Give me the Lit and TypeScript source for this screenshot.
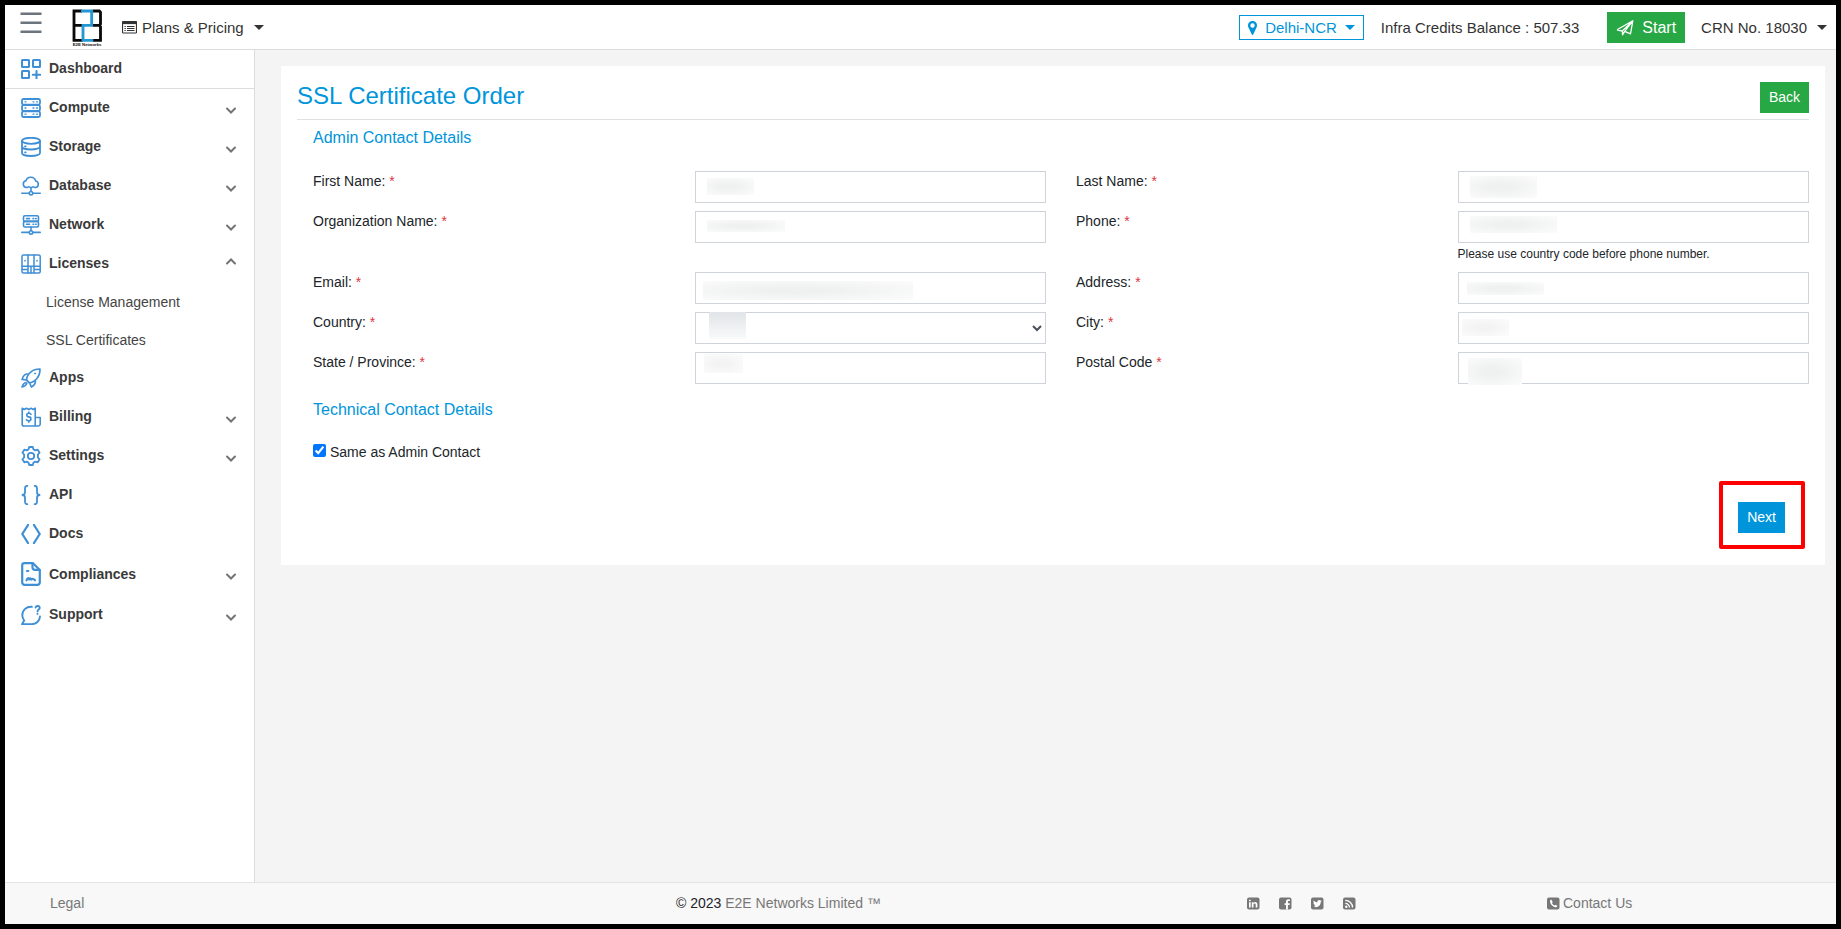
import { LitElement, html, svg, css, nothing } from "lit";
import { customElement, property, state } from "lit/decorators.js";
import { styleMap } from "lit/directives/style-map.js";

const stroke = (body: unknown, width = 1.8) => html`
  <svg viewBox="0 0 20 20" width="20" height="20" fill="none" stroke="#3f8fd6" stroke-width=${width}
    stroke-linecap="round" stroke-linejoin="round" aria-hidden="true">${body}</svg>`;

const icons: Record<string, unknown> = {
  dashboard: stroke(svg`<g stroke-linejoin="miter"><rect x="1" y="1" width="7" height="7" rx=".5"/><rect x="12" y="1" width="7" height="7" rx=".5"/><rect x="1" y="12" width="7" height="7" rx=".5"/></g><path d="M15.500 12v7.500M11.800 15.700h7.500"/>`, 2),
  compute: stroke(svg`<rect x="1" y="1" width="18" height="5.600" rx="1.500"/><rect x="1" y="7.200" width="18" height="5.600" rx="1.500"/><rect x="1" y="13.400" width="18" height="5.600" rx="1.500"/><path d="M4 3.800h1M12 3.800h1M15.500 3.800h1M4 10h1M12 10h1M15.500 10h1M4 16.200h1M12 16.200h1M15.500 16.200h1" stroke-width="1.300"/>`),
  storage: stroke(svg`<ellipse cx="10" cy="3.800" rx="9" ry="3"/><path d="M1 3.800v5.700c0 1.700 4 3 9 3s9-1.300 9-3V3.800M1 9.500V16c0 1.700 4 3 9 3s9-1.300 9-3V9.500M4 9.300h.7M4 15.300h.7"/>`),
  database: stroke(svg`<path d="M5.500 11.500a3.400 3.400 0 0 1-.6-6.700A5.100 5.100 0 0 1 14.700 5a3.300 3.300 0 0 1-.3 6.500c-1.300 0-1.400-.8-2.300-.8-.8 0-1 .8-2.100.8s-1.300-.8-2.200-.8-1 .8-2.300.8zM10 12v3M.8 17.200h7.200M12 17.200h7.200"/><circle cx="10" cy="17.200" r="1.700"/>`, 1.6),
  network: stroke(svg`<rect x="2.500" y=".8" width="15" height="5.600" rx="1.500"/><rect x="2.500" y="6.400" width="15" height="5.600" rx="1.500"/><path d="M5.500 3.600h3M12 3.600h.6M14.600 3.600h.6M5.500 9.200h3M12 9.200h.6M14.600 9.200h.6M10 12v3.500M.8 17.400h7.200M12 17.400h7.200"/><circle cx="10" cy="17.400" r="1.700"/>`, 1.6),
  licenses: stroke(svg`<rect x="1" y="1" width="18.200" height="18" rx="1.500"/><path d="M7 1v18M13 1v18M1 12.300h6M1 15.500h6M7 12.300h6M13 12.300h6M13 15.500h6M4 6.500v.6M16 6.500v.6M10 13v6"/>`, 1.5),
  apps: stroke(svg`<path d="M5.500 12.200C5.800 6 11 1 19 1c.3 7.500-4.700 13-11 13.800zM5.600 11.800l2.700 2.900M7.300 6.100C4.500 5.500 2.300 7.500 1 11.400l4.600.6M14.200 12.800c.7 2.600-1.600 5-3.800 6.300L8.500 14.600M5 14.500c-2 .3-3 1.500-4 4.500 2.500-.5 4-1.500 4.800-3.500"/><path d="M13.800 5.500h.6"/>`, 1.6),
  billing: stroke(svg`<path d="M1.200 1.200l2 1.300 2.300-1.300 2.200 1.300L10 1.200l2.300 1.300 1.900-1.300V19H3a1.800 1.800 0 0 1-1.800-1.800zM14.200 10.500h5V17.300A1.800 1.800 0 0 1 17.400 19H14.200M10 7.300c-.5-.8-1.200-1-2.200-1-2.600 0-2.700 3.300 0 3.600 3 .3 2.700 3.900 0 3.900-1.100 0-1.900-.3-2.400-1.200M7.800 5v1.200M7.800 14v1.200"/>`, 1.6),
  settings: stroke(svg`<circle cx="10" cy="10" r="3.200"/><path d="M8.200 1h3.600l.6 2.300 1.900 1.100 2.400-.7 1.900 3-1.700 1.800v3l1.700 1.800-1.900 3-2.400-.7-1.900 1.100-.6 2.300H8.200l-.6-2.300-1.900-1.100-2.400.7-1.900-3L3.100 11.500v-3L1.400 6.700l1.900-3 2.400.7 1.900-1.100z"/>`),
  api: stroke(svg`<path d="M6.300.8C4.300.8 4 1.800 4 3.300v4c0 1.700-.8 2.600-2.600 2.700C3.200 10.100 4 11 4 12.700v4c0 1.500.3 2.500 2.300 2.500M13.700.8c2 0 2.300 1 2.300 2.500v4c0 1.700.8 2.600 2.600 2.700-1.800.1-2.600 1-2.600 2.700v4c0 1.500-.3 2.500-2.300 2.500"/>`),
  docs: stroke(svg`<path d="M7 1L1.300 10 7 19M13 1l5.700 9L13 19"/>`, 2.3),
  compliances: html`<svg viewBox="0 0 20 24" width="20" height="24" fill="none" stroke="#3f8fd6" stroke-width="2.200" stroke-linecap="round" stroke-linejoin="round" aria-hidden="true"><path d="M12 1.200H3.500A2.300 2.300 0 0 0 1.200 3.500v17a2.300 2.300 0 0 0 2.300 2.300h13a2.300 2.300 0 0 0 2.300-2.300V8z"/><path d="M11.500 1.500v4a2.300 2.300 0 0 0 2.300 2.300H18.500M6 9h1.300M5.500 18.300c.8-2.300 2.200-3 2.700-.8.600-1.500 1.500-1.500 2.200 0 1-1 2.200-.7 3.600.8"/></svg>`,
  support: stroke(svg`<path d="M10.800 1.800C5.500 1.300 1.300 5 1.300 10.300c0 2 .7 3.700 1.900 5.200L1 19.200h9.300c5 0 8.500-3.200 8.700-7.700M14.600 2.500c.6-2.300 4.400-1.800 4.100.6-.2 1.400-2 1.500-2.200 3.200M16.500 8.700v.2"/>`, 1.9),
};

const chevron = (open: boolean) => html`
  <svg class="chevron ${open ? "open" : ""}" viewBox="0 0 12 12" width="12" height="12" fill="none" stroke="#747474"
    stroke-width="2" stroke-linecap="round" aria-hidden="true"><path d="M2 6.500l4 4 4-4"/></svg>`;

interface NavItem {
  icon: string;
  label: string;
  expandable?: boolean;
  children?: string[];
}

const NAV: NavItem[] = [
  { icon: "compute", label: "Compute", expandable: true },
  { icon: "storage", label: "Storage", expandable: true },
  { icon: "database", label: "Database", expandable: true },
  { icon: "network", label: "Network", expandable: true },
  { icon: "licenses", label: "Licenses", expandable: true, children: ["License Management", "SSL Certificates"] },
  { icon: "apps", label: "Apps" },
  { icon: "billing", label: "Billing", expandable: true },
  { icon: "settings", label: "Settings", expandable: true },
  { icon: "api", label: "API" },
  { icon: "docs", label: "Docs" },
  { icon: "compliances", label: "Compliances", expandable: true },
  { icon: "support", label: "Support", expandable: true },
];

@customElement("side-nav")
class SideNav extends LitElement {
  @state() private open = "Licenses";

  static styles = css`
    :host { display: block; width: 249px; flex: none; background: #fff; border-right: 1px solid #dcdcdc; }
    .item {
      display: flex; align-items: center; gap: 8px; width: 100%; box-sizing: border-box; min-height: 39px;
      padding: 8px 17px 10px 16px; border: 0; background: none; text-align: left;
      font: bold 14px/17px "Liberation Sans", Arial, sans-serif; color: #3a3a3a; text-decoration: none;
    }
    .item svg { flex: none; }
    .label { flex: 1; }
    .first { border-bottom: 1px solid #dcdcdc; padding-bottom: 9px; }
    .chevron.open { transform: rotate(180deg); }
    .subs { display: grid; gap: 1px; }
    .sub { display: block; padding: 8px 16px 8px 41px; font-size: 14px; line-height: 21px; color: #444; text-decoration: none; }
  `;

  render() {
    return html`<nav aria-label="Main">
      <a class="item first" href="#">${icons.dashboard}<span class="label">Dashboard</span></a>
      ${NAV.map((n) => {
        const open = this.open === n.label;
        return html`
          ${n.expandable
            ? html`<button class="item" aria-expanded=${open} @click=${() => (this.open = open ? "" : n.label)}>
                ${icons[n.icon]}<span class="label">${n.label}</span>${chevron(open)}
              </button>`
            : html`<a class="item" href="#">${icons[n.icon]}<span class="label">${n.label}</span></a>`}
          ${open && n.children
            ? html`<div class="subs">${n.children.map((c) => html`<a class="sub" href="#">${c}</a>`)}</div>`
            : nothing}
        `;
      })}
    </nav>`;
  }
}

@customElement("top-bar")
class TopBar extends LitElement {
  static styles = css`
    :host { display: block; border-bottom: 1px solid #dcdcdc; background: #fff; font-size: 15px; line-height: 23px; color: #333; }
    header { display: flex; align-items: center; height: 44px; box-sizing: border-box; padding: 1px 9px 0 15px; }
    button { border: 0; background: none; padding: 0; font: inherit; color: inherit; display: flex; align-items: center; }
    .menu { align-self: flex-start; padding-top: 6px; }
    .logo { display: flex; margin-left: 30px; }
    .plans { gap: 5px; margin-left: 19px; }
    .caret { width: 0; border: 5px solid transparent; border-top-color: currentColor; border-bottom: 0; margin-left: 5px; }
    .region .caret { margin-left: 8px; }
    .account .caret { margin-left: 10px; }
    .right { display: flex; align-items: center; margin-left: auto; }
    .region { height: 25px; border: 1px solid #0095da; color: #0095da; padding: 0 8px; margin-right: 17px; }
    .region svg { margin-right: 8px; }
    .start { height: 31px; padding: 0 9px; gap: 8px; margin: 0 16px 0 28px; background: #28a745; color: #fff; font-size: 16px; }
  `;

  render() {
    return html`<header>
      <button class="menu" aria-label="Toggle menu">
        <svg width="22" height="22" viewBox="0 0 22 22" stroke="#6c757d" stroke-width="2.500" aria-hidden="true"><path d="M.5 1.700h21M.5 10.700h21M.5 19.700h21"/></svg>
      </button>
      <a class="logo" href="#" aria-label="E2E Networks">
        <svg width="31" height="38" viewBox="0 0 93 114" fill="none" aria-hidden="true">
          <g stroke="#0a0a0a" stroke-width="8.500">
            <path d="M30 6H6V94H32M6 49H30"/>
            <path d="M62 6H82L85.500 10V45L82 49H62M82 49L85.500 53V94H62"/>
          </g>
          <path d="M27 6H59V49H33V94H64" stroke="#2496d4" stroke-width="8.500"/>
          <text x="2" y="112" font-size="13" font-weight="bold" fill="#111" font-family="Liberation Sans, Arial, sans-serif">E2E Networks</text>
        </svg>
      </a>
      <button class="plans">
        <svg width="15" height="13" viewBox="0 0 15 13" fill="none" stroke="#333" aria-hidden="true"><rect x=".5" y=".5" width="14" height="11.500" rx=".8" stroke-width="1.200"/><path d="M1 1.800h13" stroke-width="2.600"/><path d="M2.500 5.500h1.300M2.500 7.500h1.300M2.500 9.500h1.300M5 5.500h7.500M5 7.500h7.500M5 9.500h7.500"/></svg>
        Plans &amp; Pricing <span class="caret"></span>
      </button>
      <div class="right">
        <button class="region">
          <svg width="9" height="14" viewBox="0 0 9 14" fill="#0095da" aria-hidden="true"><path fill-rule="evenodd" d="M4.500 0A4.400 4.400 0 0 1 9 4.500c0 1-.2 1.500-.6 2.300L5.200 13.500c-.3.600-1.100.6-1.400 0L.6 6.800C.2 6 0 5.500 0 4.500A4.400 4.400 0 0 1 4.500 0zm0 2.300a2.200 2.200 0 1 0 0 4.400 2.200 2.200 0 0 0 0-4.400z"/></svg>
          Delhi-NCR <span class="caret"></span>
        </button>
        <span>Infra Credits Balance : 507.33</span>
        <button class="start">
          <svg width="18" height="16" viewBox="0 0 18 16" fill="none" stroke="#fff" stroke-width="1.300" stroke-linejoin="round" aria-hidden="true"><path d="M1 9.800L16.800.8 14.500 13.800 8.700 11.400 6.500 14.800V10.800L16.500 1.200M1 9.800l5 1.200M8.700 11.400L16.500 1.200"/></svg>
          Start
        </button>
        <button class="account">CRN No. 18030 <span class="caret"></span></button>
      </div>
    </header>`;
  }
}

@customElement("page-footer")
class PageFooter extends LitElement {
  static styles = css`
    :host { display: block; background: #f8f8f8; border-top: 1px solid #e4e4e4; }
    footer {
      display: grid; grid-template-columns: 626fr 571fr 300fr 289fr; align-items: center;
      height: 41px; padding-left: 45px; font-size: 14px; line-height: 21px; color: #212529;
    }
    a { color: #777; text-decoration: none; }
    .social { display: flex; gap: 19px; }
    .social a, .contact { display: flex; align-items: center; }
    .contact { gap: 3px; }
    svg { display: block; }
  `;

  private badge(glyph: unknown) {
    return html`<svg width="13" height="13" viewBox="0 0 13 13" aria-hidden="true"><rect y=".5" width="12.500" height="12" rx="2" fill="#777"/>${glyph}</svg>`;
  }

  render() {
    return html`<footer>
      <div><a href="#">Legal</a></div>
      <div>© 2023 <a href="#">E2E Networks Limited ™</a></div>
      <div class="social">
        <a href="#" aria-label="LinkedIn">${this.badge(svg`<path d="M2 5.200h1.700V10.500H2zM2 2.700h1.700v1.600H2zM4.800 5.200h1.600v.7c1-1.400 4-1.100 4 1.500v3.100H8.700V7.800c0-1.800-2.200-1.600-2.200 0v2.700H4.800z" fill="#fff"/>`)}</a>
        <a href="#" aria-label="Facebook">${this.badge(svg`<path d="M7 12.500V8H5.600V6.200H7V4.800c0-1.800 1-2.500 2.500-2.500h1.300v1.800h-.9c-.9 0-1 .3-1 .9v1.200h1.900L10.600 8H8.900v4.500z" fill="#fff"/>`)}</a>
        <a href="#" aria-label="Twitter">${this.badge(svg`<path d="M10.700 4l-1 1c0 3.600-3.200 6.400-7.300 4.600 1 0 1.700-.2 2.300-.7-.9-.1-1.300-.6-1.500-1.200h.7C3 7.300 2.500 6.600 2.500 5.700l.7.200c-.8-.7-1-1.500-.5-2.500 1 1.200 2.200 1.800 3.700 1.900-.3-2 1.800-2.900 3-1.700l1.100-.4-.6 1z" fill="#fff"/>`)}</a>
        <a href="#" aria-label="RSS">${this.badge(svg`<g fill="none" stroke="#fff" stroke-width="1.300"><path d="M2.300 6.400a4.200 4.200 0 0 1 4.200 4.200M2.300 3.300a7.300 7.300 0 0 1 7.300 7.300"/></g><circle cx="3.300" cy="9.700" r="1.200" fill="#fff"/>`)}</a>
      </div>
      <a class="contact" href="#">${this.badge(svg`<path d="M4.300 2.600L3 3.500C2.800 7 6 10.300 9.300 10.300l1.200-1.200-2-1.400-1 .8C6.200 8 5.500 7 5 6l.7-1z" fill="#fff"/>`)}Contact Us</a>
    </footer>`;
  }
}

interface Mask {
  x: number;
  y: number;
  w: number;
  h: number;
  tone?: string;
}

interface Field {
  id: string;
  label: string;
  mask: Mask;
  select?: boolean;
  hint?: string;
}

const FIELDS: Field[] = [
  { id: "first", label: "First Name:", mask: { x: 12, y: 7, w: 47, h: 17 } },
  { id: "last", label: "Last Name:", mask: { x: 12, y: 5, w: 67, h: 22 } },
  { id: "org", label: "Organization Name:", mask: { x: 12, y: 9, w: 78, h: 12 } },
  { id: "phone", label: "Phone:", mask: { x: 12, y: 5, w: 87, h: 17 }, hint: "Please use country code before phone number." },
  { id: "email", label: "Email:", mask: { x: 8, y: 9, w: 210, h: 19 } },
  { id: "address", label: "Address:", mask: { x: 9, y: 10, w: 77, h: 13 } },
  { id: "country", label: "Country:", mask: { x: 14, y: 0, w: 37, h: 27, tone: "dark" }, select: true },
  { id: "city", label: "City:", mask: { x: 4, y: 7, w: 47, h: 17, tone: "light" } },
  { id: "state", label: "State / Province:", mask: { x: 9, y: 2, w: 39, h: 19, tone: "light" } },
  { id: "postal", label: "Postal Code", mask: { x: 10, y: 6, w: 54, h: 27 } },
];

@customElement("form-field")
class FormField extends LitElement {
  @property({ attribute: false }) field!: Field;

  static styles = css`
    :host { display: grid; grid-template-columns: 1fr 1fr; column-gap: 30px; align-items: start; }
    label { font-size: 14px; line-height: 21px; color: #212529; }
    .req { color: #dc3545; }
    .control { position: relative; }
    input, select {
      display: block; width: 100%; height: 32px; box-sizing: border-box; margin: 0; padding: 4px 8px;
      border: 1px solid #ced4da; border-radius: 0; background: #fff; color: #495057;
      font: 14px/21px "Liberation Sans", Arial, sans-serif;
    }
    select { padding: 4px 0; }
    .mask { position: absolute; pointer-events: none; background: radial-gradient(ellipse at 45% 50%, #eff0f0 20%, #fcfcfc 100%); }
    .mask.light { background: radial-gradient(ellipse at 45% 50%, #f3f3f3 20%, #fcfcfc 100%); }
    .mask.dark { background: linear-gradient(#e1e4e8, #f9fafa); }
    .hint { padding-top: 2px; font-size: 12px; line-height: 19px; color: #212529; }
  `;

  render() {
    const { id, label, mask, select, hint } = this.field;
    const box = { left: `${mask.x}px`, top: `${mask.y}px`, width: `${mask.w}px`, height: `${mask.h}px` };
    return html`
      <label for=${id}>${label} <span class="req">*</span></label>
      <div class="control">
        ${select ? html`<select id=${id}><option></option></select>` : html`<input id=${id} type="text" />`}
        <span class="mask ${mask.tone ?? ""}" style=${styleMap(box)}></span>
        ${hint ? html`<div class="hint">${hint}</div>` : nothing}
      </div>`;
  }
}

@customElement("app-root")
class AppRoot extends LitElement {
  static styles = css`
    :host {
      display: flex; flex-direction: column; min-height: 100vh; box-sizing: border-box; border: 5px solid #000;
      background: #f4f4f4; font-family: "Liberation Sans", Arial, sans-serif; color: #212529;
    }
    .body { display: flex; flex: 1; }
    main { flex: 1; min-width: 0; padding: 16px 11px 16px 26px; }
    .card { background: #fff; padding: 16px 16px 32px; }
    .head { display: flex; justify-content: space-between; align-items: flex-start; padding-bottom: 6px; border-bottom: 1px solid #dee0e2; }
    h1, h2 { margin: 0; font-weight: normal; color: #0095da; }
    h1 { font-size: 24px; line-height: 27px; }
    h2 { font-size: 16px; line-height: 19px; }
    form { padding: 8px 0 0 16px; }
    .fields { display: grid; grid-template-columns: 1fr 1fr; gap: 8px 30px; margin: 24px 0 16px; }
    .same { display: flex; align-items: center; gap: 4px; margin-top: 23px; font-size: 14px; line-height: 21px; }
    .same input { width: 13px; height: 13px; margin: 0 0 4px; accent-color: #0075ff; }
    .btn { height: 31px; padding: 4px 8px; border: 1px solid; color: #fff; font: 14px/21px "Liberation Sans", Arial, sans-serif; }
    .green { background: #28a745; border-color: #28a745; }
    .blue { background: #0095da; border-color: #0095da; }
    .actions { display: flex; justify-content: flex-end; margin-top: 39px; padding-right: 24px; }
    .callout { position: relative; display: flex; }
    .callout::after {
      content: ""; position: absolute; inset: -21px -20px -16px -19px; border: 4px solid #f00;
      border-radius: 2px; pointer-events: none;
    }
  `;

  render() {
    return html`
      <top-bar></top-bar>
      <div class="body">
        <side-nav></side-nav>
        <main>
          <section class="card">
            <div class="head">
              <h1>SSL Certificate Order</h1>
              <button class="btn green">Back</button>
            </div>
            <form @submit=${(e: Event) => e.preventDefault()}>
              <h2>Admin Contact Details</h2>
              <div class="fields">${FIELDS.map((f) => html`<form-field .field=${f}></form-field>`)}</div>
              <h2>Technical Contact Details</h2>
              <label class="same"><input type="checkbox" checked />Same as Admin Contact</label>
              <div class="actions"><div class="callout"><button class="btn blue">Next</button></div></div>
            </form>
          </section>
        </main>
      </div>
      <page-footer></page-footer>
    `;
  }
}
